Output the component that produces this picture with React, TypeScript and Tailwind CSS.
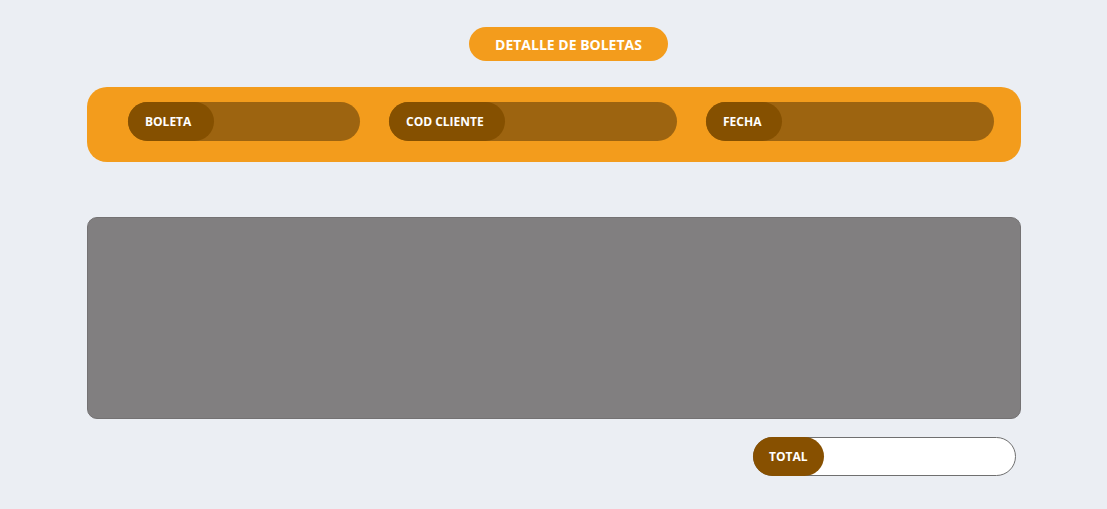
const FIELDS = [
  { label: 'BOLETA', width: 'w-[232px]', labelWidth: 'w-[86px]' },
  { label: 'COD CLIENTE', width: 'w-[288px]', labelWidth: 'w-[116px]' },
  { label: 'FECHA', width: 'w-[288px]', labelWidth: 'w-[76px]' },
];

function Field({ label, width, labelWidth }: { label: string; width: string; labelWidth: string }) {
  return (
    <div className={`relative h-[39px] ${width} rounded-full bg-[#9d6410]`}>
      <span
        className={`absolute left-0 top-0 h-[39px] ${labelWidth} rounded-full bg-[#855000] pl-[17px] flex items-center text-[12px] font-bold text-white`}
      >
        {label}
      </span>
    </div>
  );
}

export default function App() {
  return (
    <div className="w-[1107px] h-[509px] bg-[#ebeef3] pt-[27px] font-['Open_Sans',sans-serif]">
      <div className="ml-[469px] h-[34px] w-[199px] rounded-full bg-[#f39c1c] flex items-center justify-center text-[14px] font-bold text-white">
        DETALLE DE BOLETAS
      </div>

      <div className="ml-[87px] w-[934px] mt-[26px] h-[75px] rounded-[20px] bg-[#f39c1c] pl-[41px] pt-[15px] flex items-start gap-[29px]">
        {FIELDS.map(f => (
          <Field key={f.label} {...f} />
        ))}
      </div>

      <div className="ml-[87px] w-[934px] mt-[55px] h-[202px] rounded-[10px] border border-[#747273] bg-[#817f80]" />

      <div className="ml-[753px] mt-[18px] relative h-[39px] w-[263px] rounded-full border border-[#6f6f6f] bg-white">
        <span className="absolute -left-px -top-px h-[39px] w-[71px] rounded-full bg-[#875000] pl-[16px] flex items-center text-[12px] font-bold text-white">
          TOTAL
        </span>
      </div>
    </div>
  );
}
